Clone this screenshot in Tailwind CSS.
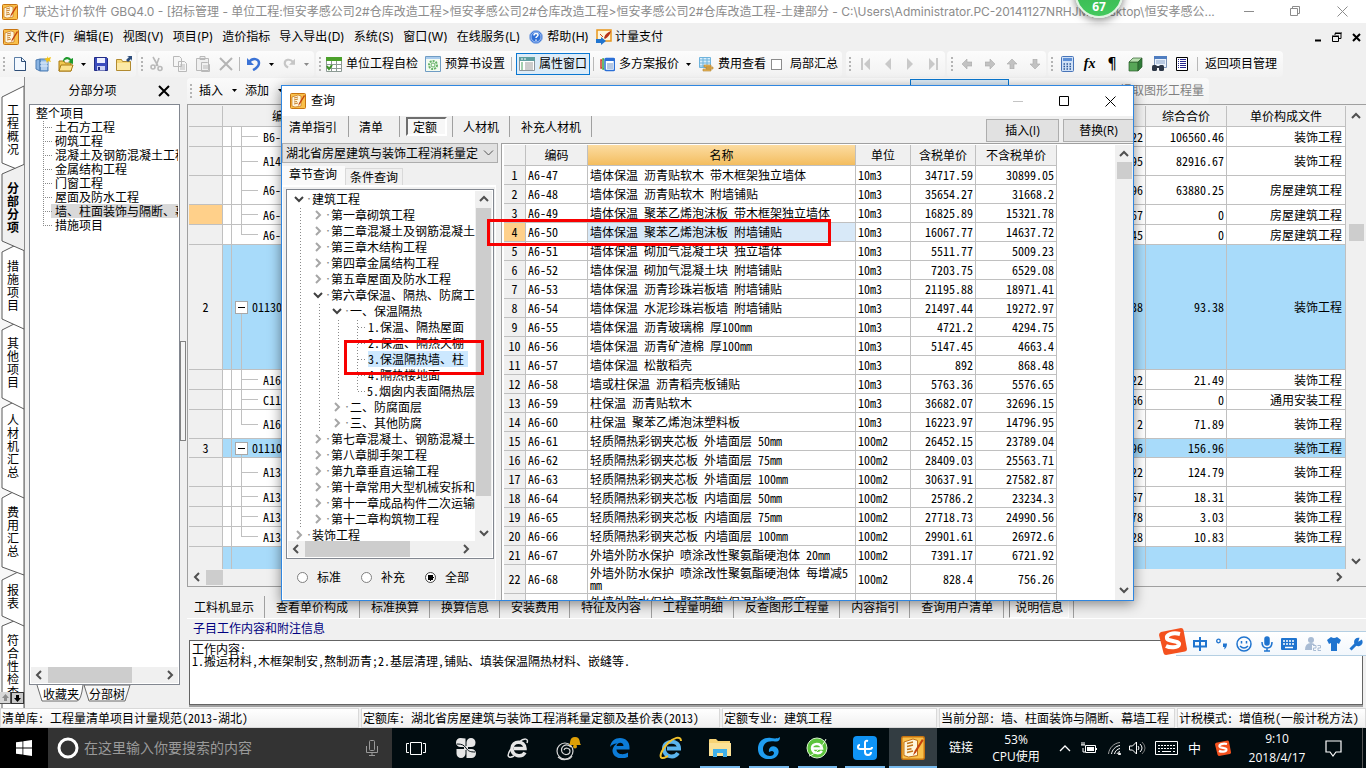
<!DOCTYPE html>
<html lang="zh-CN">
<head>
<meta charset="utf-8">
<title>广联达计价软件 GBQ4.0</title>
<script src="https://cdn.jsdelivr.net/npm/@tailwindcss/browser@4"></script>
</head>
<body class="font-['Noto_Sans_Mono_CJK_SC','Noto_Sans_CJK_SC',sans-serif] text-[12px] leading-[14px] text-black">

<svg class="hidden">
  <symbol id="app" viewBox="0 0 16 16"><rect x=".5" y=".5" width="15" height="15" rx="1" fill="#f9c04a" stroke="#c87410"/><path d="M2 4l6-2 3 1v10l-6 1-3-1z" fill="#fff6dc" stroke="#b8620c" stroke-width=".6"/><path d="M4 5l4-1M4 7l4-1M4 9l3-.5M4 11l4-1" stroke="#c2741a" stroke-width=".9"/><path d="M14 2l-5 8-1 3 2-2 5-8z" fill="#c4420e"/></symbol>
  <symbol id="up" viewBox="0 0 10 8"><path d="M1 6l4-4 4 4" fill="none" stroke="#505050" stroke-width="2"/></symbol>
  <symbol id="down" viewBox="0 0 10 8"><path d="M1 2l4 4 4-4" fill="none" stroke="#505050" stroke-width="2"/></symbol>
  <symbol id="left" viewBox="0 0 8 10"><path d="M6 1L2 5l4 4" fill="none" stroke="#505050" stroke-width="2"/></symbol>
  <symbol id="right" viewBox="0 0 8 10"><path d="M2 1l4 4-4 4" fill="none" stroke="#505050" stroke-width="2"/></symbol>
  <symbol id="tri" viewBox="0 0 5 3"><path d="M0 0h5L2.500 3z"/></symbol>
  <symbol id="grip" viewBox="0 0 2 14"><path d="M1 0v14" stroke="#b4b4b4" stroke-width="2" stroke-dasharray="2 2"/></symbol>
  <symbol id="sogou" viewBox="0 0 28 28"><path d="M2 5L22 1q2 0 2.500 2L28 22q0 2-2 2.500L7 28q-2 0-2.500-2L0 8q0-2 2-3z" fill="#f4511e"/><path d="M21 7C13 5 7 8 8 11.500c1 3 13 2 12 6C19 21 11 21 7 19" fill="none" stroke="#fff" stroke-width="4"/></symbol>
</svg>

<div class="relative flex h-screen min-h-[768px] w-full flex-col overflow-hidden bg-[#f0f0f0]">

  <!-- Title bar -->
  <header class="flex h-[23px] shrink-0 items-center bg-white font-['Inter','Noto_Sans_CJK_SC',sans-serif] text-[#8c8c8c]">
    <svg class="ml-[2px] size-4 shrink-0"><use href="#app"/></svg>
    <h1 class="ml-[5px] whitespace-nowrap">广联达计价软件 GBQ4.0 - [招标管理 - 单位工程:恒安孝感公司2#仓库改造工程&gt;恒安孝感公司2#仓库改造工程&gt;恒安孝感公司2#仓库改造工程-土建部分 - C:\Users\Administrator.PC-20141127NRHJM\Desktop\恒安孝感公...</h1>
    <div class="ml-auto flex shrink-0 text-[#8c8c8c]">
      <button class="flex h-[22px] w-[46px] items-center justify-center" aria-label="最小化"><svg class="size-[11px]"><path d="M0 5.500h10" stroke="currentColor"/></svg></button>
      <button class="flex h-[22px] w-[46px] items-center justify-center" aria-label="还原"><svg class="size-[11px]" fill="none" stroke="currentColor"><path d="M.5 2.500h7v7h-7zM2.500 2.500v-2h7v7h-2"/></svg></button>
      <button class="flex h-[22px] w-[48px] items-center justify-center" aria-label="关闭"><svg class="size-[11px]"><path d="M.5.500l10 10m0-10l-10 10" stroke="currentColor"/></svg></button>
    </div>
  </header>

  <!-- Menu -->
  <nav class="flex h-[28px] shrink-0 items-center font-['Inter','Noto_Sans_CJK_SC',sans-serif] whitespace-nowrap">
    <svg class="ml-[3px] size-4 shrink-0"><use href="#app"/></svg>
    <div class="ml-[6px] flex items-center gap-[9px]">
      <button>文件(F)</button><button>编辑(E)</button><button>视图(V)</button><button>项目(P)</button><button>造价指标</button><button>导入导出(D)</button><button>系统(S)</button><button>窗口(W)</button><button>在线服务(L)</button>
      <button class="flex items-center gap-[4px]"><svg class="size-[14px]" viewBox="0 0 14 14"><circle cx="7" cy="7" r="6.500" fill="#2f6fd6" stroke="#9db8e4"/><circle cx="7" cy="7" r="5" fill="none" stroke="#cfe0ff" stroke-width=".7"/><path d="M5 5.500c0-3 4-2.500 4-.5 0 1.500-2 1.500-2 3M7 9.500v1.300" stroke="#fff" stroke-width="1.500" fill="none"/></svg>帮助(H)</button>
      <button class="-ml-[2px] flex items-center gap-[3px]"><svg class="size-4" viewBox="0 0 16 16"><path d="M1 1h14v11H1z" fill="#fff5da" stroke="#e8951a" stroke-width="1.500"/><path d="M8 9c1-4 4-6 7-7-1 4-3 6-6 8z" fill="#b8321a"/><path d="M4 5l3 3" stroke="#c84a20"/><path d="M0 10h5V8l5 4-5 4v-2H0z" fill="#1f74cf"/></svg>计量支付</button>
    </div>
    <div class="ml-auto mr-[5px] flex items-center gap-[10px]">
      <button aria-label="最小化子窗口"><svg class="h-[10px] w-[7px]"><path d="M0 8.500h6" stroke="#000" stroke-width="2"/></svg></button>
      <button aria-label="还原子窗口"><svg class="size-[10px]" fill="none" stroke="#000"><path d="M.5 4.500h6v5h-6zM3 3V1.500h6v5H7M0 4h7M3 1h7" /></svg></button>
      <button aria-label="关闭子窗口"><svg class="size-[9px]"><path d="M1 1l7 7m0-7L1 8" stroke="#000" stroke-width="2"/></svg></button>
    </div>
  </nav>

  <!-- Main toolbar -->
  <div class="flex h-[26px] shrink-0 items-stretch gap-[2px] font-['Open_Sans','Noto_Sans_CJK_SC',sans-serif] whitespace-nowrap">
    <div class="flex items-center rounded-r bg-linear-to-b from-[#fcfcfc] to-[#f2f2f2] pr-px">
      <svg class="mx-[3px] h-[14px] w-[2px]"><use href="#grip"/></svg>
      <button class="flex w-[23px] justify-center" aria-label="新建"><svg class="h-4 w-3" viewBox="0 0 12 16"><path d="M.5 1.500h7l4 4v9H.5z" fill="#f4f9ff" stroke="#5b7ea6"/><path d="M7.500 1.500v4h4M11.500 5v9.500H1" stroke="#2f4d75" fill="none"/></svg></button>
      <button class="flex w-[23px] justify-center" aria-label="新建工程"><svg class="size-4" viewBox="0 0 16 16"><path d="M1 4l4-1v12l-4-2zM5 3h8v12H5z" fill="#8ab4e2" stroke="#4d7cb3"/><path d="M7 5v9M9 5v9M11 5v9M5 7h8M5 10h8" stroke="#dceafa"/><path d="M12 0l1 2 3-1-1 3 1 2-3-1-1 2-1-3-2-1 3-1z" fill="#f2c318"/></svg></button>
      <button class="flex w-[23px] justify-center" aria-label="打开"><svg class="size-4" viewBox="0 0 16 16"><path d="M1 5h5l1 2h6v8H1z" fill="#f0c850" stroke="#a97a12"/><path d="M3 9h12l-2 6H1z" fill="#fbe38e" stroke="#a97a12"/><path d="M5 6c0-6 6-6 8-3l2-1v6l-5-2 2-1C10 2 7 3 5 6z" fill="#1f9a2d"/></svg></button>
      <button class="flex w-3 justify-center" aria-label="打开选项"><svg class="h-[3px] w-[5px]"><use href="#tri"/></svg></button>
      <button class="flex w-[23px] justify-center" aria-label="保存"><svg class="size-[14px]" viewBox="0 0 14 14"><path d="M.5.500h12l1 1v12H.5z" fill="#3c4dbe" stroke="#222c85"/><path d="M3 1h8v5H3z" fill="#eef0ff"/><path d="M3 9h8v4.500H3z" fill="#cdd3f4"/><path d="M4 10h2v3H4z" fill="#222c85"/></svg></button>
      <button class="flex w-[23px] justify-center" aria-label="项目文件夹"><svg class="size-4" viewBox="0 0 16 16"><path d="M.5 3.500h5l1 2h8v9H.5z" fill="#f7d878" stroke="#b18a30"/><path d="M1 7h13v7H1z" fill="#fce9a6"/><path d="M10 4l3-3-2-1h5v5l-1-2-3 3z" fill="#2d4d7c"/></svg></button>
    </div>
    <div class="flex items-center rounded bg-linear-to-b from-[#fcfcfc] to-[#f2f2f2] pr-[2px]">
      <svg class="mx-[3px] h-[14px] w-[2px]"><use href="#grip"/></svg>
      <button class="flex w-[22px] justify-center text-[#b9b9b9]" aria-label="剪切"><svg class="size-4" fill="none" stroke="currentColor" stroke-width="1.600" viewBox="0 0 16 16"><path d="M4 1l5 9M10 2L7 10"/><circle cx="4" cy="11" r="2"/><circle cx="11" cy="12.500" r="2"/></svg></button>
      <button class="flex w-[23px] justify-center text-[#b9b9b9]" aria-label="复制"><svg class="size-4" fill="#f6f6f6" stroke="currentColor" viewBox="0 0 16 16"><path d="M1.500.500h6l2 2v8h-8zM6.500 5.500h6l2 2v8h-8zM8 9h5M8 11h5M8 13h5"/></svg></button>
      <button class="flex w-[23px] justify-center text-[#b9b9b9]" aria-label="粘贴"><svg class="size-4" fill="#f0f0f0" stroke="currentColor" viewBox="0 0 16 16"><path d="M1.500 2.500h12v12h-12zM5 .5h5v3H5zM6.500 6.500h6l2 2v7h-8zM8 10h5M8 12h5"/></svg></button>
      <button class="flex w-[23px] justify-center" aria-label="删除"><svg class="size-[14px]"><path d="M1 1l12 12M13 1L1 13" stroke="#b4b4b4" stroke-width="2"/></svg></button>
      <span class="mx-[2px] h-[14px] w-px bg-[#b8b8b8]"></span>
      <button class="flex w-[23px] justify-center" aria-label="撤销"><svg class="size-[14px]" viewBox="0 0 14 14"><path d="M2 5c4-5 10-3 10 1 0 3-2 5-6 7" fill="none" stroke="#3b73d6" stroke-width="2.500"/><path d="M0 1v7h7z" fill="#3b73d6"/></svg></button>
      <button class="flex w-3 justify-center" aria-label="撤销选项"><svg class="h-[3px] w-[5px]"><use href="#tri"/></svg></button>
      <button class="flex w-[23px] justify-center" aria-label="恢复"><svg class="size-[12px]" viewBox="0 0 14 14"><path d="M12 5C8 0 2 2 2 6c0 3 2 4 4 5" fill="none" stroke="#c6c6c6" stroke-width="2.500"/><path d="M14 1v7H7z" fill="#c6c6c6"/></svg></button>
      <button class="flex w-3 justify-center" aria-label="恢复选项"><svg class="h-[3px] w-[5px]" fill="#8a8a8a"><use href="#tri"/></svg></button>
    </div>
    <div class="flex items-center rounded bg-linear-to-b from-[#fcfcfc] to-[#f2f2f2] pr-1">
      <svg class="mx-[3px] h-[14px] w-[2px]"><use href="#grip"/></svg>
      <button class="flex items-center gap-1 px-[2px]"><svg class="size-4" viewBox="0 0 16 16"><path d="M.5 4.500h15v11H.5zM.5 8.500h15M.5 12.500h15M5.500 4v11M10.500 4v11" fill="#fff" stroke="#8d9a94"/><path d="M0 1h16v4H0z" fill="#4ba02a"/><path d="M1 10l2 3 3-4" stroke="#3c9428" stroke-width="2" fill="none"/></svg>单位工程自检</button>
      <button class="ml-[3px] flex items-center gap-1 px-[2px]"><svg class="size-4" viewBox="0 0 16 16"><path d="M.5.500h15v15H.5z" fill="#f3fbf1" stroke="#6f9cc4"/><path d="M1 1h14v2H1z" fill="#a9cbed"/><circle cx="8" cy="9" r="4" fill="none" stroke="#66b266" stroke-width="2" stroke-dasharray="2 1"/><circle cx="8" cy="9" r="2" fill="none" stroke="#66b266"/></svg>预算书设置</button>
      <span class="mx-1 h-[14px] w-px bg-[#b8b8b8]"></span>
      <button class="flex h-[22px] items-center gap-1 border border-[#0a78d2] bg-[#ddecf8] px-[2px]"><svg class="size-4" viewBox="0 0 16 16"><path d="M.5 1.500h15v13H.5z" fill="#fff" stroke="#8c9398"/><path d="M0 1h16v4H0z" fill="#5f9ea0"/><path d="M2 3h2M5 3h2" stroke="#fff"/><path d="M2 7h2M2 9h2M2 11h2M2 13h2" stroke="#48a05c"/><path d="M6 7h8M6 9h8M6 11h8M6 13h8" stroke="#9a9a9a"/></svg>属性窗口</button>
      <span class="mx-[3px] h-[14px] w-px bg-[#b8b8b8]"></span>
      <button class="flex items-center gap-1 px-[3px]"><svg class="size-[15px]" viewBox="0 0 15 15"><path d="M2 3h-1v8h1" fill="none" stroke="#d23a2c" stroke-width="1.500"/><path d="M4 2H3v10h1" fill="none" stroke="#3fa33f" stroke-width="1.500"/><rect x="5" y="1.500" width="9.500" height="12" rx="1" fill="#fff" stroke="#2b6fd6" stroke-width="1.500"/><path d="M5 3h9" stroke="#2b6fd6" stroke-width="2"/><path d="M7 7h6M7 9h6M7 11h6" stroke="#6a8fc6"/></svg>多方案报价</button>
      <button class="flex w-3 justify-center" aria-label="报价选项"><svg class="h-[3px] w-[5px]"><use href="#tri"/></svg></button>
      <button class="ml-1 flex items-center gap-1"><svg class="size-4" viewBox="0 0 16 16"><path d="M1.500 1.500h11v10h-11z" fill="#d8eefb" stroke="#6fb3dc"/><path d="M1 4h12M1 7h12M1 10h12M5 1v10M9 1v10" stroke="#6fb3dc"/><path d="M6 9h7v2h-7zM8 11h7v2H8zM5 13h8v2H5z" fill="#e8b85a" stroke="#b4812c" stroke-width=".6"/></svg>费用查看</button>
      <label class="ml-[5px] flex items-center gap-2"><input type="checkbox" class="size-[11px] appearance-none border border-[#8c8c8c] bg-white">局部汇总</label>
    </div>
    <div class="ml-[2px] flex items-center rounded bg-linear-to-b from-[#fcfcfc] to-[#f2f2f2]">
      <svg class="mx-[3px] h-[14px] w-[2px]"><use href="#grip"/></svg>
      <button class="flex w-[23px] justify-center" aria-label="首行"><svg class="h-3 w-[10px]" fill="#c9c9c9"><path d="M0 0h2v12H0zM9 0v12L3 6z"/></svg></button>
      <button class="flex w-[22px] justify-center" aria-label="上一行"><svg class="h-3 w-[7px]" fill="#c9c9c9"><path d="M6 0v12L0 6z"/></svg></button>
      <button class="flex w-[23px] justify-center" aria-label="下一行"><svg class="h-3 w-[7px]" fill="#c9c9c9"><path d="M0 0v12l6-6z"/></svg></button>
      <button class="flex w-[23px] justify-center" aria-label="末行"><svg class="h-3 w-[10px]" fill="#c9c9c9"><path d="M7 0h2v12H7zM0 0v12l6-6z"/></svg></button>
    </div>
    <div class="flex items-center rounded bg-linear-to-b from-[#fcfcfc] to-[#f2f2f2] pl-px">
      <svg class="mx-[3px] h-[14px] w-[2px]"><use href="#grip"/></svg>
      <button class="flex w-[22px] justify-center" aria-label="左移"><svg class="size-[10px]" fill="#c2c2c2" stroke="#a9a9a9" stroke-width=".6"><path d="M0 5l5-5v3h5v4H5v3z"/></svg></button>
      <button class="flex w-[23px] justify-center" aria-label="右移"><svg class="size-[10px]" fill="#c2c2c2" stroke="#a9a9a9" stroke-width=".6"><path d="M10 5L5 0v3H0v4h5v3z"/></svg></button>
      <button class="flex w-[22px] justify-center" aria-label="上移"><svg class="size-[10px]" fill="#c2c2c2" stroke="#a9a9a9" stroke-width=".6"><path d="M5 0l5 5H7v5H3V5H0z"/></svg></button>
      <button class="flex w-[23px] justify-center" aria-label="下移"><svg class="size-[10px]" fill="#c2c2c2" stroke="#a9a9a9" stroke-width=".6"><path d="M5 10l5-5H7V0H3v5H0z"/></svg></button>
    </div>
    <div class="flex items-center rounded bg-linear-to-b from-[#fcfcfc] to-[#f2f2f2] pr-[6px]">
      <svg class="mx-[3px] h-[14px] w-[2px]"><use href="#grip"/></svg>
      <button class="flex w-[22px] justify-center" aria-label="计算器"><svg class="h-4 w-[13px]" viewBox="0 0 13 16"><rect x=".5" y=".5" width="12" height="15" rx="1" fill="#cfe0f6" stroke="#4874b8"/><path d="M2 2h9v3H2z" fill="#5d8fd6"/><path d="M2.500 8h8M2.500 10.500h8M2.500 13h8" stroke="#2b5597" stroke-width="1.500" stroke-dasharray="1.500 1.500"/></svg></button>
      <button class="w-[23px] font-['Liberation_Serif'] text-[14px] font-bold italic" aria-label="公式">fx</button>
      <button class="w-[22px] font-['DejaVu_Sans'] text-[15px]" aria-label="段落标记">¶</button>
      <button class="flex w-[24px] justify-center" aria-label="立方体"><svg class="size-[15px]" viewBox="0 0 15 15" stroke="#2b5c2b" stroke-width=".7"><path d="M1 5h9v9H1z" fill="#57a657"/><path d="M1 5l4-4h9l-4 4z" fill="#b8dfb0"/><path d="M10 5l4-4v9l-4 4z" fill="#2f7a38"/></svg></button>
      <button class="flex w-[24px] justify-center" aria-label="查找"><svg class="size-4" viewBox="0 0 16 16"><path d="M3.500 .5h12v11h-12z" fill="#e9f1fb" stroke="#7d95b8"/><path d="M3 0h13v3H3z" fill="#4f7dc0"/><path d="M5 5h9M5 7h9" stroke="#8aa3c8"/><rect x="1" y="9" width="5" height="6" rx="1.500" fill="#2c3646"/><rect x="8" y="9" width="5" height="6" rx="1.500" fill="#2c3646"/><path d="M5 11h4" stroke="#2c3646" stroke-width="2"/></svg></button>
      <button class="flex w-[22px] justify-center" aria-label="报表"><svg class="h-[14px] w-3"><path d="M.5.500h11v13H.5z" fill="#fff" stroke="#000"/><path d="M2 2.500h1M4 2.500h6M2 4.500h1M4 4.500h6M2 6.500h1M4 6.500h6M2 8.500h1M4 8.500h6M2 10.500h1M4 10.500h6" stroke="#26268c"/></svg></button>
      <span class="ml-1 mr-[7px] h-[14px] w-px bg-[#b8b8b8]"></span>
      <button>返回项目管理</button>
    </div>
  </div>

  <!-- Workspace -->
  <main class="flex min-h-0 flex-1">

    <!-- Vertical page tabs -->
    <nav class="relative flex w-[25px] shrink-0 flex-col overflow-hidden border-r border-[#8c8c8c] bg-[#f7f7f7]">
      <svg class="absolute top-0 left-0 h-[631px] w-[24px]" viewBox="0 77 24 631" stroke="#5a5a5a">
        <g fill="#fff">
          <path d="M24 619L14 621 2 626v90h22z"/><path d="M24 569L2 580v36l22 10z"/><path d="M24 486L2 498v69l22 8z"/>
          <path d="M24 397L2 408v80l22 10z"/><path d="M24 319L2 330v68l22 11z"/><path d="M24 241L2 252v67l22 10z"/><path d="M24 86L2 97v66l22 9z"/>
        </g>
        <path d="M25 164L2 174v67l23 10" fill="#f0f0f0"/>
      </svg>
      <button class="relative flex h-[91px] shrink-0 flex-col items-center justify-center pt-[12px] pl-[2px] leading-[13px]"><span class="w-3">工程概况</span></button>
      <button class="relative flex h-[78px] shrink-0 flex-col items-center justify-center pl-[2px] leading-[13px] font-bold"><span class="w-3">分部分项</span></button>
      <button class="relative flex h-[78px] shrink-0 flex-col items-center justify-center pl-[2px] leading-[13px]"><span class="w-3">措施项目</span></button>
      <button class="relative flex h-[76px] shrink-0 flex-col items-center justify-center pl-[2px] leading-[13px]"><span class="w-3">其他项目</span></button>
      <button class="relative flex h-[91px] shrink-0 flex-col items-center justify-center pl-[2px] leading-[13px]"><span class="w-3">人材机汇总</span></button>
      <button class="relative flex h-[80px] shrink-0 flex-col items-center justify-center pl-[2px] leading-[13px]"><span class="w-3">费用汇总</span></button>
      <button class="relative flex h-[50px] shrink-0 flex-col items-center justify-center pl-[2px] leading-[13px]"><span class="w-3">报表</span></button>
      <button class="relative flex min-h-0 flex-1 flex-col items-center justify-start overflow-hidden pt-[12px] pl-[2px] leading-[13px]"><span class="w-3">符合性检查</span></button>
      <div class="relative mb-[4px] flex h-3 shrink-0 bg-[#d8d8d8]">
        <button class="flex w-[11px] items-center justify-center border-r border-b border-[#555]" aria-label="向上滚动"><svg class="size-[7px]" fill="#8c8c8c"><path d="M3.500 0L7 4H5v3H2V4H0z"/></svg></button>
        <button class="flex flex-1 items-center justify-center border border-[#333] bg-[#c8c8c8]" aria-label="向下滚动"><svg class="size-[7px]"><path d="M3.500 7L7 3H5V0H2v3H0z"/></svg></button>
      </div>
    </nav>

    <!-- Section tree -->
    <aside class="flex w-[155px] shrink-0 flex-col pl-1">
      <div class="flex h-[27px] shrink-0 items-center font-['Open_Sans','Noto_Sans_CJK_SC',sans-serif]">
        <h2 class="flex-1 pr-[2px] text-center">分部分项</h2>
        <button class="mr-[10px]" aria-label="关闭面板"><svg class="size-[12px]"><path d="M1 1l10 10M11 1L1 11" stroke="#000" stroke-width="2"/></svg></button>
      </div>
      <div class="flex min-h-0 flex-1 flex-col border border-[#828790] bg-white p-px">
        <ul class="relative flex-1 overflow-hidden whitespace-nowrap">
          <svg class="absolute top-[15px] left-[12px] h-[105px] w-[10px]"><path d="M.5 0v105M0 6.500h9M0 20.500h9M0 34.500h9M0 48.500h9M0 62.500h9M0 76.500h9M0 90.500h9M0 104.500h9" stroke="#8a8a8a" stroke-dasharray="1 1"/></svg>
          <li class="pl-[5px]">整个项目</li>
          <li class="pl-[24px]">土石方工程</li>
          <li class="pl-[24px]">砌筑工程</li>
          <li class="pl-[24px]">混凝土及钢筋混凝土工程</li>
          <li class="pl-[24px]">金属结构工程</li>
          <li class="pl-[24px]">门窗工程</li>
          <li class="pl-[24px]">屋面及防水工程</li>
          <li class="ml-[20px] bg-[#d9d9d9] pl-[4px]">墙、柱面装饰与隔断、幕墙工程</li>
          <li class="pl-[24px]">措施项目</li>
        </ul>
        <div class="flex h-[16px] shrink-0 items-center bg-[#f0f0f0] px-[4px]">
          <svg class="h-[10px] w-2"><use href="#left"/></svg><span class="ml-[5px] h-full w-[84px] bg-[#cdcdcd]"></span><svg class="ml-auto h-[10px] w-2"><use href="#right"/></svg>
        </div>
      </div>
      <div class="relative flex h-[23px] shrink-0 items-start gap-[10px] pt-[2px] pl-[14px]">
        <svg class="absolute top-0 left-[7px] h-[18px] w-[98px]" fill="#f7f7f7" stroke="#6a6a6a"><path d="M48 0h46l-5 16H53z"/><path d="M1 0l5 16h35q4 0 6-16" fill="#fff"/></svg>
        <button class="relative">收藏夹</button><button class="relative">分部树</button>
      </div>
    </aside>

    <div class="flex w-[7px] shrink-0 items-start pt-[264px]"><span class="h-[100px] w-[6px] border border-[#828282] bg-[#f4f4f4]"></span></div>

    <section class="flex min-w-0 flex-1 flex-col">
      <!-- Edit toolbar -->
      <div class="flex h-[27px] shrink-0 pt-px font-['Open_Sans','Noto_Sans_CJK_SC',sans-serif] whitespace-nowrap">
        <div class="flex w-[1022px] items-center rounded bg-linear-to-b from-[#fafafa] to-[#f2f2f2] pr-[5px] pb-px">
          <svg class="mx-[3px] h-[14px] w-[2px]"><use href="#grip"/></svg>
          <button class="ml-1">插入</button>
          <button class="flex w-[22px] justify-center" aria-label="插入选项"><svg class="h-[3px] w-[5px]"><use href="#tri"/></svg></button>
          <button>添加</button>
          <button class="flex w-[22px] justify-center" aria-label="添加选项"><svg class="h-[3px] w-[5px]"><use href="#tri"/></svg></button>
          <button class="ml-auto h-[23px] w-[99px] border border-[#0a78d2] bg-[#ddecf8]" aria-label="显示选项"></button>
          <button class="ml-[111px] text-[#808080]">提取图形工程量</button>
        </div>
      </div>

      <!-- Bill grid -->
      <div class="flex min-h-0 flex-1 flex-col border border-r-0 border-[#a0a0a0] bg-[#f0f0f0] pt-px pl-px">
        <div class="flex min-h-0 flex-1">
          <div class="min-w-0 flex-1 overflow-hidden bg-white">
            <table class="w-full table-fixed border-separate border-spacing-0">
              <colgroup><col class="w-[34px]"><col class="w-[200px]"><col><col class="w-[81px]"><col class="w-[119px]"></colgroup>
              <thead><tr class="h-[21px] bg-[#f0f0f0]">
                <th class="border-r border-b border-[#c0c0c0]" aria-label="序号"></th>
                <th class="border-r border-b border-[#c0c0c0] pl-[49px] text-left font-normal">编码</th>
                <th class="border-r border-b border-[#c0c0c0]" aria-label="综合单价"></th>
                <th class="border-r border-b border-[#c0c0c0] font-normal">综合合价</th>
                <th class="border-r border-b border-[#c0c0c0] font-normal">单价构成文件</th>
              </tr></thead>
              <tbody id="bill"></tbody>
            </table>
          </div>
          <div class="flex w-[20px] shrink-0 flex-col items-center pt-[6px] pb-1">
            <svg class="h-2 w-[10px]"><use href="#up"/></svg>
            <span class="mt-[104px] h-[17px] w-[15px] bg-[#cdcdcd]"></span>
            <svg class="mt-auto h-2 w-[10px]"><use href="#down"/></svg>
          </div>
        </div>
        <div class="flex h-[17px] shrink-0 items-center pr-[23px] pb-px pl-[4px]">
          <svg class="h-[10px] w-2"><use href="#left"/></svg><span class="ml-[5px] h-[15px] w-[17px] bg-[#cdcdcd]"></span><svg class="ml-auto h-[10px] w-2"><use href="#right"/></svg>
        </div>
      </div>

      <!-- Detail tabs -->
      <nav class="flex h-[31px] shrink-0 items-end whitespace-nowrap">
        <button class="h-[22px] border-r border-[#a0a0a0] pr-[10px] pl-[7px]">工料机显示</button>
        <button class="h-[22px] border-r border-[#a0a0a0] px-[11px]">查看单价构成</button>
        <button class="h-[22px] border-r border-[#a0a0a0] pr-[10px] pl-[11px]">标准换算</button>
        <button class="h-[22px] border-r border-[#a0a0a0] pr-[10px] pl-[11px]">换算信息</button>
        <button class="h-[22px] border-r border-[#a0a0a0] pr-[10px] pl-[11px]">安装费用</button>
        <button class="h-[22px] border-r border-[#a0a0a0] pr-[10px] pl-[11px]">特征及内容</button>
        <button class="h-[22px] border-r border-[#a0a0a0] pr-[10px] pl-[11px]">工程量明细</button>
        <button class="h-[22px] border-r border-[#a0a0a0] pr-[10px] pl-[11px]">反查图形工程量</button>
        <button class="h-[22px] border-r border-[#a0a0a0] pr-[10px] pl-[11px]">内容指引</button>
        <button class="h-[22px] border-r border-[#a0a0a0] pr-[10px] pl-[11px]">查询用户清单</button>
        <span class="ml-[5px] border-r border-[#a0a0a0] pr-[4px]"><button class="h-[22px] border border-t-[#828282] border-r-white border-b-white border-l-[#828282] bg-[#f7f7f7] px-[5px]">说明信息</button></span>
      </nav>
      <label for="note" class="flex h-[22px] shrink-0 items-center border-t border-white pb-1 pl-[6px] text-[#000080]">子目工作内容和附注信息</label>
      <div class="flex h-[68px] shrink-0 flex-col pr-[3px] pb-[3px] pl-[2px]">
        <textarea id="note" readonly class="h-full w-full resize-none border border-[#646464] bg-white px-[2px] pt-[2px] leading-[12px] shadow-[0_2px_0_#a0a0a0]">工作内容:
1.搬运材料,木框架制安,熬制沥青;2.基层清理,铺贴、填装保温隔热材料、嵌缝等.</textarea>
      </div>
    </section>
  </main>

  <!-- Status bar -->
  <footer class="flex h-[20px] shrink-0 gap-[2px] whitespace-nowrap">
    <span class="flex w-[359px] items-center border border-[#d9d9d9] bg-linear-to-b from-white to-[#f0f0f0] pl-px whitespace-pre">清单库: 工程量清单项目计量规范(2013-湖北)</span>
    <span class="flex w-[359px] items-center border border-[#d9d9d9] bg-linear-to-b from-white to-[#f0f0f0] pl-px whitespace-pre">定额库: 湖北省房屋建筑与装饰工程消耗量定额及基价表(2013)</span>
    <span class="flex w-[215px] items-center border border-[#d9d9d9] bg-linear-to-b from-white to-[#f0f0f0] pl-px whitespace-pre">定额专业: 建筑工程</span>
    <span class="flex w-[236px] items-center border border-[#d9d9d9] bg-linear-to-b from-white to-[#f0f0f0] pl-px whitespace-pre">当前分部: 墙、柱面装饰与隔断、幕墙工程</span>
    <span class="flex flex-1 items-center border border-[#d9d9d9] bg-linear-to-b from-white to-[#f0f0f0] pl-px whitespace-pre">计税模式: 增值税(一般计税方法)</span>
  </footer>

  <!-- Taskbar -->
  <div class="flex h-[40px] shrink-0 items-stretch bg-[#010c10] font-['Open_Sans','Noto_Sans_CJK_SC',sans-serif] text-white">
    <button class="flex w-[48px] items-center justify-center bg-black" aria-label="开始"><svg class="size-4" fill="#fff"><path d="M0 2.300L6.500 1.400v6.200H0zM7.300 1.300L16 0v7.600H7.300zM0 8.400h6.500v6.200L0 13.700zM7.300 8.400H16V16l-8.700-1.300z"/></svg></button>
    <label class="flex w-[344px] items-center bg-[#333] px-[9px]"><svg class="size-[22px] shrink-0"><circle cx="11" cy="11" r="9" fill="none" stroke="#fff" stroke-width="3"/></svg>
      <input type="text" placeholder="在这里输入你要搜索的内容" aria-label="搜索" class="ml-[5px] min-w-0 flex-1 bg-transparent text-[14px] leading-[20px] placeholder:text-[#9a9a9a]">
      <svg class="mr-[5px] h-4 w-3" fill="none" stroke="#9a9a9a"><rect x="3.500" y=".5" width="5" height="10" rx="1"/><path d="M.5 6v6.500h11V6M6 13v2.500M3 15.500h6"/></svg></label>
    <button class="flex w-[48px] items-center justify-center" aria-label="任务视图"><svg class="h-4 w-5" fill="none" stroke="#fff"><path d="M4.500 2.500h11v12h-11zM3 3.500H.5v9H3M17 3.500h2.500v9H17"/></svg></button>
    <button class="flex w-[52px] items-center justify-center" aria-label="应用"><svg class="size-[22px]" viewBox="0 0 22 22" fill="#e6e6e6"><path d="M10.500 1.500V10H5.500a4.500 4.500 0 010-9zM11.500 10V5.500a4.500 4.500 0 019 0Q20.500 10 16 10zM1.500 12h9v4.500a4.500 4.500 0 01-9 0zM11.500 12h5a4.500 4.500 0 010 9h-5z"/><path d="M9 9h4v4H9z"/><path d="M2 7c5 0 7 1 9 4s4 4 9 4" stroke="#010c10" fill="none"/></svg></button>
    <button class="flex w-[52px] items-center justify-center" aria-label="浏览器"><svg class="size-[22px]" viewBox="0 0 22 22"><path d="M18 15.500c-3 5.500-13 4-13-4C5 3 18 3 18 11.500H7" fill="none" stroke="#e6e6e6" stroke-width="3.500"/><path d="M20 6c2-5-3-5-8-1M4 12c-5 7-3 10 3 7" fill="none" stroke="#e6e6e6" stroke-width="1.500"/></svg></button>
    <button class="flex w-[49px] items-center justify-center" aria-label="提醒"><svg class="h-7 w-7" viewBox="0 0 28 28"><circle cx="10" cy="17" r="8" fill="none" stroke="#d8d8d8" stroke-width="1.200"/><path d="M16 13c-5-5-11 0-9 5 2 4 8 3 8-1 0-3-5-4-6-1M3 23c4 4 12 3 14-1" fill="none" stroke="#d8d8d8" stroke-width="1.200"/><path d="M14 11c2-2 0-8 6-8s4 6 6 8z" fill="#dfa006"/><circle cx="20" cy="12.500" r="2" fill="#dfa006"/></svg></button>
    <button class="flex w-[53px] items-center justify-center" aria-label="Edge"><svg class="size-5" viewBox="0 0 20 20"><path d="M0 9C1 3 5 0 10 0c6 0 9.500 4 9.500 9v2.500H6.500c0 5 7 6 11.500 3v4.500C10 22.500 2 19 2.500 12 3 9 4.500 7 7 5.500 4 5.500 1.500 7 0 9zM6.500 8h7c0-4-6-4.500-7 0z" fill="#0c7cd8"/></svg></button>
    <button class="flex w-[49px] items-center justify-center" aria-label="Internet Explorer"><svg class="size-6" viewBox="0 0 24 24"><path d="M19 17c-4 6-14 4-14-4.500C5 4 20 3 20 12.500H8" fill="none" stroke="#5ab4ee" stroke-width="4"/><path d="M22 5c0-6-8-3-13 2S-1 21 3 22c2 .5 4-1 6-2" fill="none" stroke="#f2c22c" stroke-width="2"/></svg></button>
    <button class="relative flex w-[49px] items-center justify-center" aria-label="文件资源管理器"><svg class="h-[18px] w-[22px]" viewBox="0 0 22 18"><path d="M0 1q0-1 1-1h6l2 2h12v15H0z" fill="#f7d374"/><path d="M0 4h22v13H0z" fill="#fbe196"/><path d="M4 18v-8h14v8h-4v-4H8v4z" fill="#3fb0ea"/></svg><span class="absolute bottom-0 h-[2px] w-[40px] bg-[#76b9ed]"></span></button>
    <button class="relative flex w-[49px] items-center justify-center" aria-label="浏览器"><svg class="size-6" viewBox="0 0 24 24"><path d="M23 1c0 4-2 5-5 4.500C10 4 6 8 6 13c0 4 3 7 7 7 2 0 4-1 4-3 0-1-1-2-2-2-2 0-2 1-3 1-1-4 3-7 7-5 5 3 3 12-7 12C5 23 1 19 1 13 1 5 7 1 14 2c3 .5 6 1 9-1z" fill="#1f9df0"/></svg><span class="absolute bottom-0 h-[2px] w-[40px] bg-[#76b9ed]"></span></button>
    <button class="relative flex w-[48px] items-center justify-center" aria-label="安全浏览器"><svg class="size-[22px]" viewBox="0 0 22 22"><circle cx="11" cy="11" r="10" fill="#5cc43c" stroke="#d8f4cc"/><path d="M16 14c-3 4-10 2-10-3s9-6 10 .5H7" fill="none" stroke="#fff" stroke-width="2.500"/><path d="M3 19C8 18 17 9 20 2" stroke="#f4fff0" fill="none"/></svg><span class="absolute bottom-0 h-[2px] w-[39px] bg-[#76b9ed]"></span></button>
    <button class="relative flex w-[48px] items-center justify-center" aria-label="云应用"><svg class="size-6" viewBox="0 0 24 24"><rect width="24" height="24" rx="4" fill="#0f93f5"/><path d="M15 5q-3-1-3 2v9q0 3 3 3 3 0 3-3M7 9q-2 0-2 2t2 2h10q2 0 2-2" fill="none" stroke="#fff" stroke-width="2"/></svg><span class="absolute bottom-0 h-[2px] w-[40px] bg-[#76b9ed]"></span></button>
    <button class="relative flex w-[48px] items-center justify-center bg-[#333d42]" aria-label="广联达计价软件"><svg class="size-6"><use href="#app"/></svg><span class="absolute bottom-0 h-[2px] w-full bg-[#76b9ed]"></span></button>
    <div class="flex flex-1 items-center">
      <span class="ml-[12px] whitespace-nowrap">链接</span>
      <span class="ml-[18px] flex w-[50px] flex-col text-center leading-[17px] whitespace-nowrap"><span>53%</span><span>CPU使用</span></span>
      <button class="ml-[18px]" aria-label="显示隐藏的图标"><svg class="h-[8px] w-3" fill="none" stroke="#fff" stroke-width="1.300"><path d="M1 7l5-5 5 5"/></svg></button>
      <svg class="ml-[10px] h-3 w-4" fill="none" stroke="#fff"><path d="M4.500 3.500h10v7h-10zM0 3h4M1 0v3M3 0v3M2 6v4h2"/><path d="M6 5h7v4H6zM15 6h1v2h-1z" fill="#fff" stroke="none"/></svg>
      <svg class="ml-[11px] h-[13px] w-[13px]" fill="none" stroke="#fff"><path d="M.5 12C1 6 6 1 12 .5" stroke="#a0a0a0"/><path d="M3.500 12c.5-4 4-8 8.500-8.500M6.500 12c.5-3 3-5 5.500-5.500M9 12c.5-1.500 1.500-2 3-2.500"/><circle cx="11.500" cy="12" r="1" fill="#fff"/></svg>
      <svg class="ml-[8px] h-[14px] w-[18px]" fill="none" stroke="#fff"><path d="M.5 5h3l4-4v12l-4-4h-3zM9 5q2 2 0 4M11 3q4 4 0 8"/><path d="M13 1q6 6 0 12" stroke="#777"/></svg>
      <svg class="ml-[8px] h-[14px] w-[23px]" fill="none" stroke="#fff"><path d="M.5.500h22v13H.5z"/><path d="M3 4.500h17M3 7.500h17" stroke-dasharray="2 1"/><path d="M3 10.500h2m2 0h9m2 0h2"/></svg>
      <span class="ml-[10px] text-[13px]">中</span>
      <svg class="ml-[14px] size-4"><use href="#sogou"/></svg>
      <span class="ml-[12px] flex w-[68px] flex-col text-center leading-[19px] whitespace-nowrap"><span>9:10</span><span>2018/4/17</span></span>
      <button class="ml-[14px]" aria-label="通知"><svg class="size-[17px]" fill="none" stroke="#fff" stroke-width="1.200"><path d="M1 1h15v11h-5l-3 4-3-4H1z"/></svg></button>
      <span class="mr-[3px] ml-auto h-full w-px bg-[#555]"></span>
    </div>
  </div>

  <!-- Query window -->
  <div role="dialog" aria-label="查询" class="absolute top-[85px] left-[281px] flex h-[516px] w-[853px] flex-col border border-[#2f86e0] bg-[#f0f0f0] shadow-[0_3px_12px_rgba(0,0,0,0.45)]">
    <div class="flex h-[30px] shrink-0 items-center bg-white font-['Open_Sans','Noto_Sans_CJK_SC',sans-serif]">
      <svg class="ml-2 size-4"><use href="#app"/></svg><h2 class="ml-[5px]">查询</h2>
      <div class="ml-auto flex">
        <button class="flex w-[45px] justify-center" aria-label="最小化"><svg class="size-[11px]"><path d="M0 5.500h10" stroke="#c4c4c4"/></svg></button>
        <button class="flex w-[46px] justify-center" aria-label="最大化"><svg class="size-[11px]"><path d="M.5.500h9v9h-9z" fill="none" stroke="#000"/></svg></button>
        <button class="flex w-[46px] justify-center" aria-label="关闭"><svg class="size-[11px]"><path d="M.5.500l10 10m0-10l-10 10" stroke="#000"/></svg></button>
      </div>
    </div>
    <div class="flex h-[27px] shrink-0 items-start whitespace-nowrap">
      <div class="flex h-[21px] items-stretch">
        <button class="border-r border-[#a0a0a0] pr-[11px] pl-[7px]">清单指引</button>
        <button class="border-r border-[#a0a0a0] pr-[16px] pl-[10px]">清单</button>
        <span class="flex border-r border-[#a0a0a0] py-px pr-[5px] pl-[6px]"><button class="border-2 border-t-[#6e6e6e] border-r-white border-b-white border-l-[#6e6e6e] bg-[#f7f7f7] pr-[8px] pl-[5px] leading-[15px]">定额</button></span>
        <button class="border-r border-[#a0a0a0] px-[10px]">人材机</button>
        <button class="border-r border-[#a0a0a0] pr-[10px] pl-[11px]">补充人材机</button>
      </div>
      <div class="mt-[3px] ml-auto flex h-[23px] gap-[4px] font-['Open_Sans','Noto_Sans_CJK_SC',sans-serif]">
        <button class="w-[73px] border border-[#adadad] bg-[#e1e1e1]">插入(I)</button>
        <button class="w-[70px] border border-r-0 border-[#adadad] bg-[#e1e1e1]">替换(R)</button>
      </div>
    </div>

    <div class="flex min-h-0 flex-1 gap-[5px]">
      <div class="flex w-[214px] shrink-0 flex-col">
        <div class="relative mb-[3px] h-[20px] shrink-0">
          <select aria-label="定额库" class="h-full w-[216px] appearance-none overflow-hidden border border-[#adadad] bg-[#e1e1e1] pr-[19px] pl-[3px] leading-[14px]"><option>湖北省房屋建筑与装饰工程消耗量定</option></select>
          <svg class="pointer-events-none absolute top-[6px] left-[201px] h-2 w-[11px]" fill="none" stroke="#555"><path d="M1 1.500l4.500 4.500L10 1.500"/></svg>
        </div>
        <div class="flex h-[19px] shrink-0 items-end">
          <button class="h-full bg-[#fafafa] pr-[8px] pb-[3px] pl-[7px]">章节查询</button><button class="h-[17px] border border-b-0 border-[#d9d9d9] px-[4px]">条件查询</button>
        </div>
        <div class="flex min-h-0 flex-1 flex-col border border-t-2 border-white pt-[2px] pr-px pl-[3px]">
          <div class="flex h-[370px] shrink-0 flex-col border border-[#828790] bg-white p-px">
            <div class="flex min-h-0 flex-1">
              <ul id="chapters" class="relative min-w-0 flex-1 overflow-hidden leading-[16px] whitespace-nowrap">
                <svg class="absolute top-[17px] left-[12px] h-[320px] w-[70px]"><path d="M.5 0v320M19.500 96v128M38.500 112v80M57.500 112v72M58 119.500h9M58 135.500h9M58 151.500h9M58 167.500h9M58 183.500h9" fill="none" stroke="#8a8a8a" stroke-dasharray="1 2"/></svg>
              </ul>
              <div class="flex w-[17px] shrink-0 flex-col items-center bg-[#f0f0f0] pt-1 pb-1"><svg class="h-2 w-[10px]"><use href="#up"/></svg><span class="mt-[5px] h-[288px] w-[15px] bg-[#cdcdcd]"></span><svg class="mt-auto h-2 w-[10px]"><use href="#down"/></svg></div>
            </div>
            <div class="flex h-[16px] shrink-0 items-center bg-[#f0f0f0] pr-[22px] pl-[4px]"><svg class="h-[10px] w-2"><use href="#left"/></svg><span class="ml-[5px] h-full w-[105px] bg-[#cdcdcd]"></span><svg class="ml-auto h-[10px] w-2"><use href="#right"/></svg></div>
          </div>
          <fieldset class="flex flex-1 items-center gap-[28px] pb-[4px] pl-[11px] whitespace-nowrap">
            <label class="flex items-center gap-[9px]"><input type="radio" name="kind" class="size-[11px] appearance-none rounded-full border border-[#808080] bg-white"><span class="w-[24px]">标准</span></label>
            <label class="-ml-[8px] flex items-center gap-[9px]"><input type="radio" name="kind" class="size-[11px] appearance-none rounded-full border border-[#808080] bg-white"><span class="w-[24px]">补充</span></label>
            <label class="-ml-[8px] flex items-center gap-[9px]"><input type="radio" name="kind" checked class="size-[11px] appearance-none rounded-full border border-[#444] bg-white checked:bg-[radial-gradient(circle,#000_3px,#fff_3px)]"><span class="w-[24px]">全部</span></label>
          </fieldset>
        </div>
      </div>

      <div class="flex min-w-0 flex-1 border-t border-l border-[#a0a0a0] bg-white pt-px pl-[2px]">
        <div class="min-w-0 flex-1 overflow-hidden">
          <table class="table-fixed border-separate border-spacing-0 w-[553px]">
            <colgroup><col class="w-[22px]"><col class="w-[62px]"><col class="w-[268px]"><col class="w-[55px]"><col class="w-[65px]"><col class="w-[81px]"></colgroup>
            <thead><tr class="h-[21px] bg-[#f0f0f0]">
              <th class="border-r border-b border-[#c0c0c0]" aria-label="序号"></th>
              <th class="border-r border-b border-[#c0c0c0] font-normal">编码</th>
              <th class="border-r border-b border-[#c0c0c0] bg-linear-to-b from-[#fcdca0] to-[#f3bd5e] font-normal">名称</th>
              <th class="border-r border-b border-[#c0c0c0] font-normal">单位</th>
              <th class="border-r border-b border-[#c0c0c0] font-normal">含税单价</th>
              <th class="border-r border-b border-[#c0c0c0] font-normal">不含税单价</th>
            </tr></thead>
            <tbody id="quota"></tbody>
          </table>
        </div>
        <div class="flex w-[18px] shrink-0 flex-col items-center bg-[#f0f0f0] pt-[5px] pb-[6px]"><svg class="h-2 w-[10px]"><use href="#up"/></svg><span class="mt-[4px] h-[17px] w-[15px] bg-[#cdcdcd]"></span><svg class="mt-auto h-2 w-[10px]"><use href="#down"/></svg></div>
      </div>
    </div>
  </div>

  <!-- Highlight marks -->
  <span class="pointer-events-none absolute top-[219px] left-[487px] h-[27px] w-[344px] border-[3px] border-[#f80000]"></span>
  <span class="pointer-events-none absolute top-[340px] left-[344px] h-[35px] w-[140px] border-[3px] border-[#f80000]"></span>

  <!-- Floating monitor ball -->
  <div class="absolute top-[-30px] left-[1075px] flex size-[48px] items-end justify-center rounded-full border-2 border-[#dff3e2] bg-linear-to-b from-[#2fae4a] to-[#43c95e] pb-[2px] font-['Open_Sans'] text-[12px] font-bold text-white shadow-[0_2px_8px_rgba(0,0,0,0.5)]">67</div>

  <!-- Input method bar -->
  <div class="absolute top-[631px] right-0 flex h-[25px] w-[190px] items-center border-y border-[#b4cfe3] bg-linear-to-b from-white to-[#f2f7fc] pl-[16px] text-[#1f74cf]">
    <svg class="absolute -top-[5px] -left-[17px] size-7"><use href="#sogou"/></svg>
    <svg class="h-[14px] w-4" fill="none" stroke="currentColor" stroke-width="2"><path d="M2 4h12v5.500H2zM8 0v14"/></svg>
    <svg class="ml-[8px] h-3 w-[12px]"><circle cx="2.500" cy="3" r="1.800" fill="none" stroke="currentColor" stroke-width="1.300"/><path d="M7 5.500h4c0 3-1 5-3 6 .5-1 .5-1.500.5-2.500H7z" fill="currentColor"/></svg>
    <svg class="ml-[8px] size-4" fill="none" stroke="currentColor" stroke-width="1.500"><circle cx="8" cy="8" r="7"/><path d="M5.500 5v2.500M10.500 5v2.500M4 10q4 4 8 0"/></svg>
    <svg class="ml-[9px] h-4 w-3" fill="none" stroke="currentColor" stroke-width="1.500"><rect x="4" y="1" width="4" height="8" rx="2" fill="currentColor"/><path d="M1 6q0 6 5 6t5-6M6 12v3M3 15h6"/></svg>
    <svg class="ml-[8px] h-3 w-4"><rect width="16" height="12" rx="1" fill="currentColor"/><path d="M2 3h12M2 6h12" stroke="#fff" stroke-width="1.500" stroke-dasharray="2 1"/><path d="M4 9.500h8" stroke="#fff" stroke-width="1.500"/></svg>
    <svg class="ml-[8px] h-4 w-4" fill="#a9bcd4"><circle cx="6" cy="4" r="3"/><path d="M0 14q0-7 6-7 3 0 4 2H7v5z"/><path d="M8 9.500h3v2.500H8.500v2.500H11M12.500 9.500h3v2.500H13v2.500h3" fill="none" stroke="#a9bcd4"/></svg>
    <svg class="ml-[6px] h-[14px] w-[14px]" fill="currentColor"><path d="M4 0q3 2 6 0l4 3-2 4-2-1v8H4V6L2 7 0 3z"/></svg>
    <svg class="ml-[8px] size-[14px]" fill="none" stroke="currentColor"><path d="M1.500 12.500L8 6" stroke-width="3"/><path d="M12.500 3.500A3.500 3.500 0 119.500 1.500L8.500 4.500l1 1z" stroke-width="1.500" fill="currentColor"/></svg>
  </div>
</div>

<script>
const quota = [
 ['A6-47','墙体保温 沥青贴软木 带木框架独立墙体','10m3','34717.59','30899.05'],
 ['A6-48','墙体保温 沥青贴软木 附墙铺贴','10m3','35654.27','31668.2'],
 ['A6-49','墙体保温 聚苯乙烯泡沫板 带木框架独立墙体','10m3','16825.89','15321.78'],
 ['A6-50','墙体保温 聚苯乙烯泡沫板 附墙铺贴','10m3','16067.77','14637.72'],
 ['A6-51','墙体保温 砌加气混凝土块 独立墙体','10m3','5511.77','5009.23'],
 ['A6-52','墙体保温 砌加气混凝土块 附墙铺贴','10m3','7203.75','6529.08'],
 ['A6-53','墙体保温 沥青珍珠岩板墙 附墙铺贴','10m3','21195.88','18971.41'],
 ['A6-54','墙体保温 水泥珍珠岩板墙 附墙铺贴','10m3','21497.44','19272.97'],
 ['A6-55','墙体保温 沥青玻璃棉 厚100mm','10m3','4721.2','4294.75'],
 ['A6-56','墙体保温 沥青矿渣棉 厚100mm','10m3','5147.45','4663.4'],
 ['A6-57','墙体保温 松散稻壳','10m3','892','868.48'],
 ['A6-58','墙或柱保温 沥青稻壳板铺贴','10m3','5763.36','5576.65'],
 ['A6-59','柱保温 沥青贴软木','10m3','36682.07','32696.15'],
 ['A6-60','柱保温 聚苯乙烯泡沫塑料板','10m3','16223.97','14796.95'],
 ['A6-61','轻质隔热彩钢夹芯板 外墙面层 50mm','100m2','26452.15','23789.04'],
 ['A6-62','轻质隔热彩钢夹芯板 外墙面层 75mm','100m2','28409.03','25563.71'],
 ['A6-63','轻质隔热彩钢夹芯板 外墙面层 100mm','100m2','30637.91','27582.87'],
 ['A6-64','轻质隔热彩钢夹芯板 内墙面层 50mm','100m2','25786.2','23234.3'],
 ['A6-65','轻质隔热彩钢夹芯板 内墙面层 75mm','100m2','27718.73','24990.56'],
 ['A6-66','轻质隔热彩钢夹芯板 内墙面层 100mm','100m2','29901.61','26972.6'],
 ['A6-67','外墙外防水保护 喷涂改性聚氨酯硬泡体 20mm','100m2','7391.17','6721.92'],
 ['A6-68','外墙外防水保护 喷涂改性聚氨酯硬泡体 每增减5<br>mm','100m2','828.4','756.26'],
 ['A6-69','外墙外防水保护 聚苯颗粒保温砂浆 厚度<br>mm','100m2','','']
];
document.getElementById('quota').innerHTML = quota.map((r, i) => {
  const cell = 'border-r border-b border-[#c0c0c0] overflow-hidden whitespace-nowrap ';
  const on = i === 3;
  return `<tr class="${i > 20 ? 'h-[29px]' : 'h-[19px]'} leading-[12px]">
    <td class="${cell}${on ? 'bg-[#ffd08a]' : 'bg-[#f0f0f0]'} text-center">${i + 1}</td>
    <td class="${cell}pl-[2px]">${r[0]}</td>
    <td class="${cell}${on ? 'bg-[#d8e9f8]' : ''} pl-[2px]">${r[1]}</td>
    <td class="${cell}pl-[2px]">${r[2]}</td>
    <td class="${cell}text-right"><span class="mr-[2px]">${r[3]}</span></td>
    <td class="${cell}text-right"><span class="mr-[2px]">${r[4]}</span></td></tr>`;
}).join('');

const chapters = [
 [0,'open','建筑工程'],[1,'shut','第一章砌筑工程'],[1,'shut','第二章混凝土及钢筋混凝土'],[1,'shut','第三章木结构工程'],
 [1,'shut','第四章金属结构工程'],[1,'shut','第五章屋面及防水工程'],[1,'open','第六章保温、隔热、防腐工'],[2,'open','一、保温隔热'],
 [3,'','1.保温、隔热屋面'],[3,'','2.保温、隔热天棚'],[3,'on','3.保温隔热墙、柱'],[3,'','4.隔热楼地面'],[3,'','5.烟囱内表面隔热层'],
 [2,'shut','二、防腐面层'],[2,'shut','三、其他防腐'],[1,'shut','第七章混凝土、钢筋混凝土'],[1,'shut','第八章脚手架工程'],
 [1,'shut','第九章垂直运输工程'],[1,'shut','第十章常用大型机械安拆和'],[1,'shut','第十一章成品构件二次运输'],[1,'shut','第十二章构筑物工程'],[0,'shut','装饰工程']
];
const indent = ['pl-[5px]', 'pl-[24px]', 'pl-[43px]', 'pl-[61px]'];
document.getElementById('chapters').insertAdjacentHTML('beforeend', chapters.map(([lv, st, name]) => {
  const mark = st === 'open'
    ? '<svg class="h-2 w-[10px]"><path d="M1 2l4 4 4-4" fill="none" stroke="#404040" stroke-width="2"/></svg>'
    : st === 'shut' ? '<svg class="h-[10px] w-[8px]"><path d="M2 1l4 4-4 4" fill="none" stroke="#a6a6a6" stroke-width="2"/></svg>' : '';
  return `<li class="relative flex h-[16px] items-center ${indent[lv]}"><span class="flex w-[12px] justify-center">${mark}</span><span class="w-[7px] text-center text-[8px] text-[#888]">${mark ? '·' : ''}</span><span class="${st === 'on' ? 'bg-[#cce8ff] pr-[4px]' : ''}">${name}</span></li>`;
}).join(''));

const bill = [
 ['h-[20px]','','B6-','22','106560.46','装饰工程'],['h-[29px]','','A14','95','82916.67','装饰工程'],['h-[29px]','','A6-','96','63880.25','房屋建筑工程'],
 ['h-[20px]','*','A6-','67','0','房屋建筑工程'],['h-[20px]','','A6-','45','0','房屋建筑工程'],['h-[125px]','2','01130','38','93.38','装饰工程'],
 ['h-[20px]','','A16','22','21.49','装饰工程'],['h-[20px]','','C11','66','0','通用安装工程'],['h-[29px]','','A16','2','71.89','装饰工程'],
 ['h-[19px]','3','01110','96','156.96','装饰工程'],['h-[29px]','','A13','22','124.79','装饰工程'],['h-[20px]','','A13','57','18.31','装饰工程'],
 ['h-[20px]','','A13','78','3.03','装饰工程'],['h-[20px]','','A13','28','10.83','装饰工程'],['h-[29px]','','','','','']
];
document.getElementById('bill').innerHTML = bill.map(([h, no, code, p, total, file], i) => {
  const head = no > 0 || !code;
  const last = !bill[i + 1] || bill[i + 1][1] > 0 || !bill[i + 1][2];
  const cell = 'border-r border-b border-[#c0c0c0] ';
  const stem = head
    ? (code ? `<span class="flex flex-1 items-center"><span class="flex w-[18px] flex-col items-center self-stretch"><span class="flex-1"></span><span class="flex size-[13px] shrink-0 items-center justify-center border border-[#a8a8a8] bg-white"><span class="h-px w-[7px] bg-black"></span></span><span class="w-px flex-1 bg-[#c0c0c0]"></span></span><span class="pl-[2px]">${code}</span></span>` : '')
    : `<span class="w-[9px]"></span><span class="flex w-[17px] flex-col"><span class="flex-1 border-b border-l border-[#c0c0c0]"></span><span class="flex-1 ${last ? '' : 'border-l border-[#c0c0c0]'}"></span></span><span class="self-center pl-[5px]">${code}</span>`;
  return `<tr class="${h} ${head ? 'bg-[#a8dbfa]' : 'bg-white'}">
    <td class="${cell}${no === '*' ? 'bg-[#ffd08a]' : 'bg-[#f0f0f0]'} p-0 text-center">${no > 0 ? no : ''}</td>
    <td class="border-b border-[#c0c0c0] p-0 ${h}"><div class="flex h-full"><span class="w-[9px] border-r border-[#c0c0c0]"></span>${stem}</div></td>
    <td class="${cell}p-0 text-right"><span class="mr-[2px]">${p}</span></td>
    <td class="${cell}p-0 text-right"><span class="mr-[2px]">${total}</span></td>
    <td class="${cell}p-0 text-right"><span class="mr-[3px]">${file}</span></td></tr>`;
}).join('');
</script>
</body>
</html>
